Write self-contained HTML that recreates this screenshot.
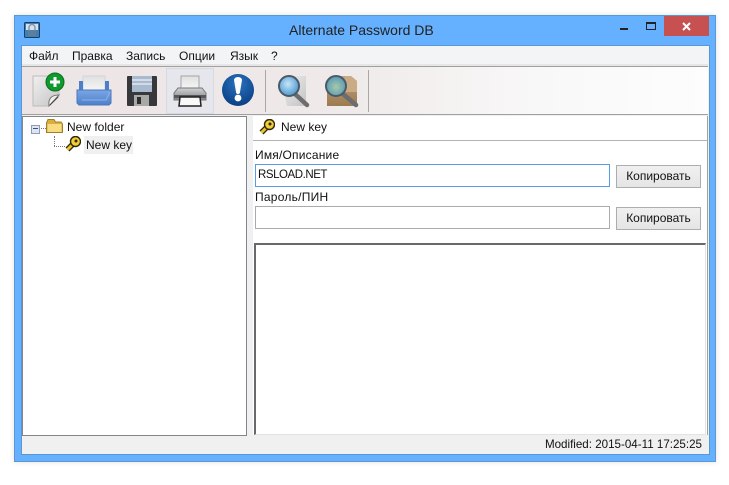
<!DOCTYPE html>
<html><head><meta charset="utf-8"><style>
html,body{margin:0;padding:0;background:#fff;width:729px;height:485px;overflow:hidden}
body{position:relative;font-family:"Liberation Sans",sans-serif;font-size:12px;color:#111}
.a{position:absolute}
.t{position:absolute;white-space:nowrap;line-height:14px}
.btn{position:absolute;left:616px;width:83px;height:21px;border:1px solid #adadad;background:linear-gradient(#f0f0f0,#e5e5e5);text-align:center;line-height:21px}
</style></head><body>
<div class="a" style="left:14px;top:15px;width:700px;height:445px;background:#65b0ff;border:1px solid #5b97d1;box-shadow:0 0 5px rgba(0,0,0,.12)"></div>
<svg class="a" style="left:24px;top:22px" width="16" height="16" viewBox="0 0 16 16"><rect x=".5" y=".5" width="15" height="15" rx="1" fill="#3f7fb5" stroke="#1d3f63"/><rect x="2" y="2" width="12" height="6" fill="#cfe3f3"/><path d="M5 8V5.5a3 3 0 0 1 6 0V8" fill="none" stroke="#8b98a5" stroke-width="1.5"/><rect x="4" y="8" width="8" height="6" fill="#5a7f9f"/></svg>
<div class="t" style="left:289px;top:22px;font-size:14px;line-height:16px;color:#222">Alternate Password DB</div>
<div class="a" style="left:664px;top:16px;width:45px;height:20px;background:#c75050"></div>
<svg class="a" style="left:680px;top:20px" width="14" height="12"><path d="M3 3L10 10M10 3L3 10" stroke="#fff" stroke-width="2"/></svg>
<div class="a" style="left:620px;top:28px;width:8px;height:2px;background:#222"></div>
<div class="a" style="left:646px;top:22px;width:8px;height:5px;border:1px solid #222;border-top-width:2px"></div>
<div class="a" style="left:21px;top:45px;background:#f0f0f0;border:1px solid #5b97d1;box-sizing:border-box;width:689px;height:410px"></div>
<div class="a" style="left:22px;top:46px;width:686px;height:18px;background:#f3f4f6"></div>
<div class="a" style="left:22px;top:64px;width:686px;height:2px;background:#e6e6e6"></div>
<div class="t" style="left:29px;top:49px">Файл</div>
<div class="t" style="left:72px;top:49px">Правка</div>
<div class="t" style="left:126px;top:49px">Запись</div>
<div class="t" style="left:179px;top:49px">Опции</div>
<div class="t" style="left:230px;top:49px">Язык</div>
<div class="t" style="left:271px;top:49px">?</div>
<div class="a" style="left:22px;top:66px;width:686px;height:1px;background:#a0a0a0"></div>
<div class="a" style="left:22px;top:67px;width:686px;height:47px;background:linear-gradient(90deg,#ede5e5 0,#efe9e9 45%,#f9f8f8 75%,#fdfdfd 100%)"></div>
<div class="a" style="left:22px;top:114px;width:686px;height:1px;background:#a0a0a0"></div>
<div class="a" style="left:166px;top:68px;width:48px;height:46px;background:#e6e7ec;box-sizing:border-box;border:1px solid #d5dae4"></div>
<svg class="a" style="left:0;top:0" width="729" height="485" viewBox="0 0 729 485">
<defs>
<linearGradient id="pg" x1="0" y1="0" x2="1" y2="1"><stop offset="0" stop-color="#f0f0f0"/><stop offset="1" stop-color="#c4c4c4"/></linearGradient>
<linearGradient id="bl" x1="0" y1="0" x2="0" y2="1"><stop offset="0" stop-color="#7ba6e6"/><stop offset="1" stop-color="#4d7fc8"/></linearGradient>
<linearGradient id="wh" x1="0" y1="0" x2="0" y2="1"><stop offset="0" stop-color="#e0e0e0"/><stop offset="1" stop-color="#f8f8f8"/></linearGradient>
<linearGradient id="gr" x1="0" y1="0" x2="0" y2="1"><stop offset="0" stop-color="#d2d3d4"/><stop offset="1" stop-color="#7e8184"/></linearGradient>
<radialGradient id="ln" cx=".45" cy=".4" r=".6"><stop offset="0" stop-color="#c5e6f8"/><stop offset="1" stop-color="#4e98d0"/></radialGradient>
<radialGradient id="ln2" cx=".5" cy=".55" r=".6"><stop offset="0" stop-color="#a9c9a8"/><stop offset="1" stop-color="#4f95b8"/></radialGradient>
<radialGradient id="bg" cx=".5" cy=".3" r=".7"><stop offset="0" stop-color="#2a74bf"/><stop offset="1" stop-color="#0b3f85"/></radialGradient>
<linearGradient id="bx" x1="0" y1="0" x2="0" y2="1"><stop offset="0" stop-color="#c4a47c"/><stop offset="1" stop-color="#9c7a50"/></linearGradient>
</defs>
<path d="M33 76H59V96L49 106H33Z" fill="url(#pg)" stroke="#bcbcbc"/>
<path d="M49 106C48 99 51 95 59 95Z" fill="#efefef" stroke="#777"/><path d="M50 105L58 97" stroke="#444"/>
<circle cx="55" cy="82" r="9" fill="#0e9a2c" stroke="#0a6e1f"/><path d="M55 77V87M50 82H60" stroke="#fff" stroke-width="3"/>
<rect x="83" y="76" width="22" height="16" fill="url(#wh)" stroke="#cfd6de"/>
<path d="M79 81H83V90H79ZM105 81H109V90H105Z" fill="#4d7fc8"/>
<path d="M77 90H111V103L109 105H79L77 103Z" fill="url(#bl)" stroke="#4a78bc"/>
<path d="M82 100H106L110 92" fill="none" stroke="#8db2ea"/>
<rect x="127" y="76" width="30" height="30" rx="1" fill="#36383b"/>
<rect x="132" y="76" width="20" height="16" fill="#a9bacf"/>
<path d="M132 80H152M132 84H152" stroke="#dfe6ef" stroke-width="1.5"/>
<rect x="134" y="95" width="15" height="11" fill="#a8a8a8"/><rect x="137" y="97" width="4" height="7" fill="#2e2e2e"/>
<rect x="181" y="76" width="18" height="14" fill="url(#wh)" stroke="#a5a5a5"/>
<path d="M178 88H202L206 93V100H174V93Z" fill="url(#gr)" stroke="#777"/>
<rect x="174" y="95" width="32" height="3" fill="#55585c"/>
<path d="M180 97H200L201 106H179Z" fill="#f8f8f8" stroke="#222" stroke-width="1.5"/>
<circle cx="238" cy="90" r="16" fill="url(#bg)"/>
<path d="M234 80a4 3 0 0 1 8 0L240 92a2 2 0 0 1-4 0Z" fill="#fff"/><circle cx="238" cy="98" r="3.4" fill="#fff"/>
<rect x="265" y="70" width="1" height="42" fill="#a8a8a8"/>
<path d="M281 76H306V106H287Z" fill="url(#pg)"/>
<path d="M295 94L307 105" stroke="#6d6d6d" stroke-width="4.5" stroke-linecap="round"/>
<circle cx="289" cy="86" r="10" fill="url(#ln)" stroke="#4a5a68" stroke-width="2"/>
<path d="M327 80L333 76H351L357 81V106H327Z" fill="url(#bx)"/>
<path d="M345 76H351L357 81V92H345Z" fill="#c9ab85"/>
<path d="M343 94L356 105" stroke="#6d6d6d" stroke-width="4.5" stroke-linecap="round"/>
<circle cx="336" cy="86" r="10" fill="url(#ln2)" stroke="#4a5a68" stroke-width="2"/>
<rect x="368" y="70" width="1" height="42" fill="#a8a8a8"/>
</svg>
<div class="a" style="left:22px;top:116px;width:225px;height:320px;box-sizing:border-box;background:#fff;border:1px solid #82878c"></div>
<div class="a" style="left:31px;top:125px;width:7px;height:7px;border:1px solid #8e9cbc;background:#dfe4ef"></div><div class="a" style="left:33px;top:128px;width:5px;height:1px;background:#33518f"></div>
<div class="a" style="left:41px;top:128px;width:5px;border-top:1px dotted #777"></div>
<svg class="a" style="left:46px;top:119px" width="17" height="14"><path d="M.5 4L2 .5H8L9.5 3H15L16.5 5V13.5H.5Z" fill="#dcae3c" stroke="#a07f2c"/><rect x="1.5" y="5" width="14" height="8" fill="#f8dc82"/></svg>
<div class="t" style="left:67px;top:120px">New folder</div>
<div class="a" style="left:54px;top:136px;height:10px;border-left:1px dotted #777"></div><div class="a" style="left:54px;top:146px;width:11px;border-top:1px dotted #777"></div>
<svg class="a" style="left:65px;top:136px" width="16" height="16"><path d="M2.5 13.5L9 7" stroke="#2e2606" stroke-width="5.5"/><path d="M2.5 13.5L9 7" stroke="#e9c52a" stroke-width="3"/><circle cx="10.5" cy="5.5" r="5" fill="#efce3a" stroke="#2e2606" stroke-width="1.4"/><circle cx="11" cy="5" r="1.5" fill="#2e2606"/></svg>
<div class="a" style="left:84px;top:136px;width:49px;height:18px;background:#f0f0f0"></div>
<div class="t" style="left:86px;top:138px">New key</div>
<div class="a" style="left:253px;top:116px;width:454px;height:319px;background:#fff"></div>
<div class="a" style="left:707px;top:116px;width:1px;height:319px;background:#a0a0a0"></div>
<svg class="a" style="left:259px;top:119px" width="16" height="16"><path d="M2.5 13.5L9 7" stroke="#2e2606" stroke-width="5.5"/><path d="M2.5 13.5L9 7" stroke="#e9c52a" stroke-width="3"/><circle cx="10.5" cy="5.5" r="5" fill="#efce3a" stroke="#2e2606" stroke-width="1.4"/><circle cx="11" cy="5" r="1.5" fill="#2e2606"/></svg>
<div class="t" style="left:281px;top:120px">New key</div>
<div class="a" style="left:253px;top:140px;width:454px;height:1px;background:#b4b4b4"></div>
<div class="t" style="left:255px;top:148px;letter-spacing:.2px">Имя/Описание</div>
<div class="a" style="left:255px;top:164px;width:355px;height:23px;box-sizing:border-box;border:1px solid #569de5;background:#fff;padding-left:2px;line-height:20px;font-size:11.5px;letter-spacing:-.45px">RSLOAD.NET</div>
<div class="t" style="left:255px;top:190px;letter-spacing:.25px">Пароль/ПИН</div>
<div class="a" style="left:255px;top:206px;width:355px;height:23px;box-sizing:border-box;border:1px solid #ababab;background:#fff"></div>
<div class="btn" style="top:165px">Копировать</div>
<div class="btn" style="top:207px">Копировать</div>
<div class="a" style="left:254px;top:243px;width:452px;height:192px;box-sizing:border-box;border:1px solid #e3e3e3;border-top:2px solid #696969;border-left:2px solid #696969;background:#fff"></div>
<div class="a" style="left:22px;top:436px;width:686px;height:18px;background:#f0f0f0"></div>
<div class="t" style="right:27px;top:438px;font-size:11.6px">Modified: 2015-04-11 17:25:25</div>
</body></html>
